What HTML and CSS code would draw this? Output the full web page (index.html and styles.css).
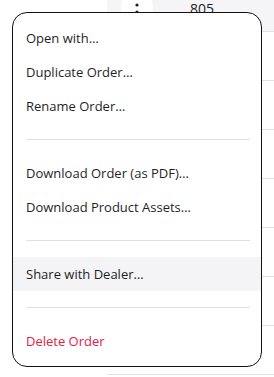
FILE: index.html
```html
<!DOCTYPE html>
<html lang="en">
<head>
  <meta charset="UTF-8">
  <meta name="viewport" content="width=device-width, initial-scale=1.0">
  <title>Order Actions Menu</title>
  <link rel="stylesheet" href="styles.css">
</head>
<body>
  <!-- Orders table behind the menu -->
  <div class="orders">
    <div class="gutter"></div>
    <div class="rows">
      <div class="row row-hover">
        <span class="kebab">
          <svg width="4" height="18" viewBox="0 0 4 18"><circle cx="2" cy="2" r="1.6"/><circle cx="2" cy="9" r="1.6"/><circle cx="2" cy="16" r="1.6"/></svg>
        </span>
        <span class="qty">805</span>
      </div>
      <div class="row"></div>
      <div class="row"></div>
      <div class="row"></div>
      <div class="row"></div>
      <div class="row"></div>
      <div class="row"></div>
      <div class="row"></div>
    </div>
  </div>

  <!-- Context menu -->
  <div class="menu" role="menu">
    <div class="menu-item" role="menuitem">Open with…</div>
    <div class="menu-item" role="menuitem">Duplicate Order…</div>
    <div class="menu-item" role="menuitem">Rename Order…</div>
    <div class="separator"></div>
    <div class="menu-item" role="menuitem">Download Order (as PDF)…</div>
    <div class="menu-item" role="menuitem">Download Product Assets…</div>
    <div class="separator"></div>
    <div class="menu-item active" role="menuitem">Share with Dealer…</div>
    <div class="separator"></div>
    <div class="menu-item danger" role="menuitem">Delete Order</div>
  </div>
</body>
</html>
```

FILE: styles.css
```css
body {
  margin: 0;
  font-family: "Open Sans", "Noto Sans", Arial, sans-serif;
  font-size: 13px;
  color: #1f1f1f;
  background: #fff;
  overflow: hidden;
}
.orders {
  display: grid;
  grid-template-columns: 107px 1fr;
  height: 377px;
}
.rows {
  margin-top: -17px;
}
.row {
  height: 48px;
  border-bottom: 1px solid #e2e2e2;
  display: flex;
  align-items: center;
  padding-left: 14px;
}
.row-hover {
  background-color: #f5f5f7;
}
.kebab {
  width: 32px;
  height: 32px;
  border-radius: 50%;
  background: #fff;
  display: flex;
  align-items: center;
  justify-content: center;
}
.kebab svg {
  fill: #1f1f1f;
  margin-top: 9px;
}
.qty {
  margin-left: 37px;
  margin-top: 2px;
  font-size: 14px;
}
.menu {
  position: absolute;
  top: 12px;
  left: 12px;
  width: 248px;
  padding: 8px 0;
  background: #fff;
  border: 1px solid #111;
  border-radius: 15px;
}
.menu-item {
  height: 34px;
  line-height: 34px;
  padding-left: 13px;
  cursor: pointer;
  white-space: nowrap;
}
.menu-item.active {
  background-color: #f4f4f6;
}
.menu-item.danger {
  color: #e11d48;
}
.separator {
  height: 1px;
  margin: 16px 11px 16px 13px;
  background: #e0e0e0;
}
```
